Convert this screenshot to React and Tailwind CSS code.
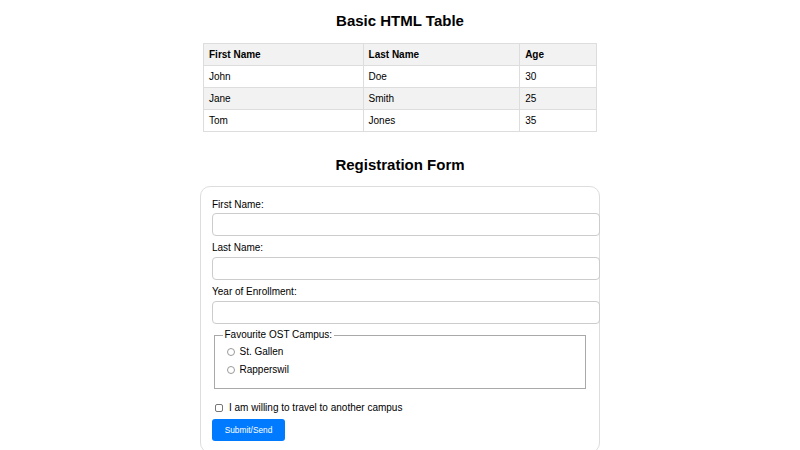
export default function App() {
  const rows = [
    { first: 'John', last: 'Doe', age: 30 },
    { first: 'Jane', last: 'Smith', age: 25 },
    { first: 'Tom', last: 'Jones', age: 35 },
  ]

  return (
    <div className="min-h-screen bg-white text-black font-['Liberation_Sans',Arial,sans-serif] text-[10px]">
      {/* Table section */}
      <h2 className="pt-[12px] text-center text-[15px] font-bold leading-[17px]">Basic HTML Table</h2>
      <table className="mx-auto mt-[14px] w-[394px] border-collapse border border-[#ddd] text-left">
        <thead>
          <tr className="bg-[#f2f2f2]">
            <th className="w-[160px] border border-[#ddd] px-[5px] py-[5px] leading-[11px] font-bold">First Name</th>
            <th className="w-[157px] border border-[#ddd] px-[5px] py-[5px] leading-[11px] font-bold">Last Name</th>
            <th className="w-[77px] border border-[#ddd] px-[5px] py-[5px] leading-[11px] font-bold">Age</th>
          </tr>
        </thead>
        <tbody>
          {rows.map((r, i) => (
            <tr key={r.first} className={i % 2 === 1 ? 'bg-[#f2f2f2]' : 'bg-white'}>
              <td className="border border-[#ddd] px-[5px] py-[5px] leading-[11px]">{r.first}</td>
              <td className="border border-[#ddd] px-[5px] py-[5px] leading-[11px]">{r.last}</td>
              <td className="border border-[#ddd] px-[5px] py-[5px] leading-[11px]">{r.age}</td>
            </tr>
          ))}
        </tbody>
      </table>

      {/* Form section */}
      <h2 className="mt-[24px] text-center text-[15px] font-bold leading-[17px]">Registration Form</h2>
      <form className="mx-auto mt-[13px] w-[400px] rounded-[10px] border border-[#ddd] px-[11px] pt-[12px] pb-[11px]">
        <label className="mb-[2px] block leading-[12px]">First Name:</label>
        <input type="text" className="mb-[6px] block h-[23px] w-[calc(100%+12px)] rounded-[4px] border border-[#ccc] px-[5px]" />
        <label className="mb-[3px] block leading-[12px]">Last Name:</label>
        <input type="text" className="mb-[6px] block h-[23px] w-[calc(100%+12px)] rounded-[4px] border border-[#ccc] px-[5px]" />
        <label className="mb-[3px] block leading-[12px]">Year of Enrollment:</label>
        <input type="text" className="mb-[5px] block h-[23px] w-[calc(100%+12px)] rounded-[4px] border border-[#ccc] px-[5px]" />

        <fieldset className="mx-[2px] mb-[13px] border border-[#a9a9a9] px-[7.5px] pt-[5px] pb-[6px]">
          <legend className="px-[2px] leading-[12px]">Favourite OST Campus:</legend>
          {['St. Gallen', 'Rappersw\u0069l'].map((c) => (
            <label key={c} className="mb-[6px] flex items-center leading-[12px]">
              <span className="ml-[4px] mr-[5px] inline-block h-[8px] w-[8px] rounded-full border border-[#9a9a9a] bg-white" />
              {c}
            </label>
          ))}
        </fieldset>

        <label className="mb-[5px] flex items-center leading-[12px]">
          <span className="ml-[3px] mr-[6px] inline-block h-[8px] w-[8px] rounded-[2px] border border-[#767676] bg-white" />
          I am willing to travel to another campus
        </label>

        <button type="button" className="flex h-[22px] w-[73px] items-center justify-center rounded-[3px] bg-[#007bff] text-[8.33px] text-white">
          Submit/Send
        </button>
      </form>
    </div>
  )
}
